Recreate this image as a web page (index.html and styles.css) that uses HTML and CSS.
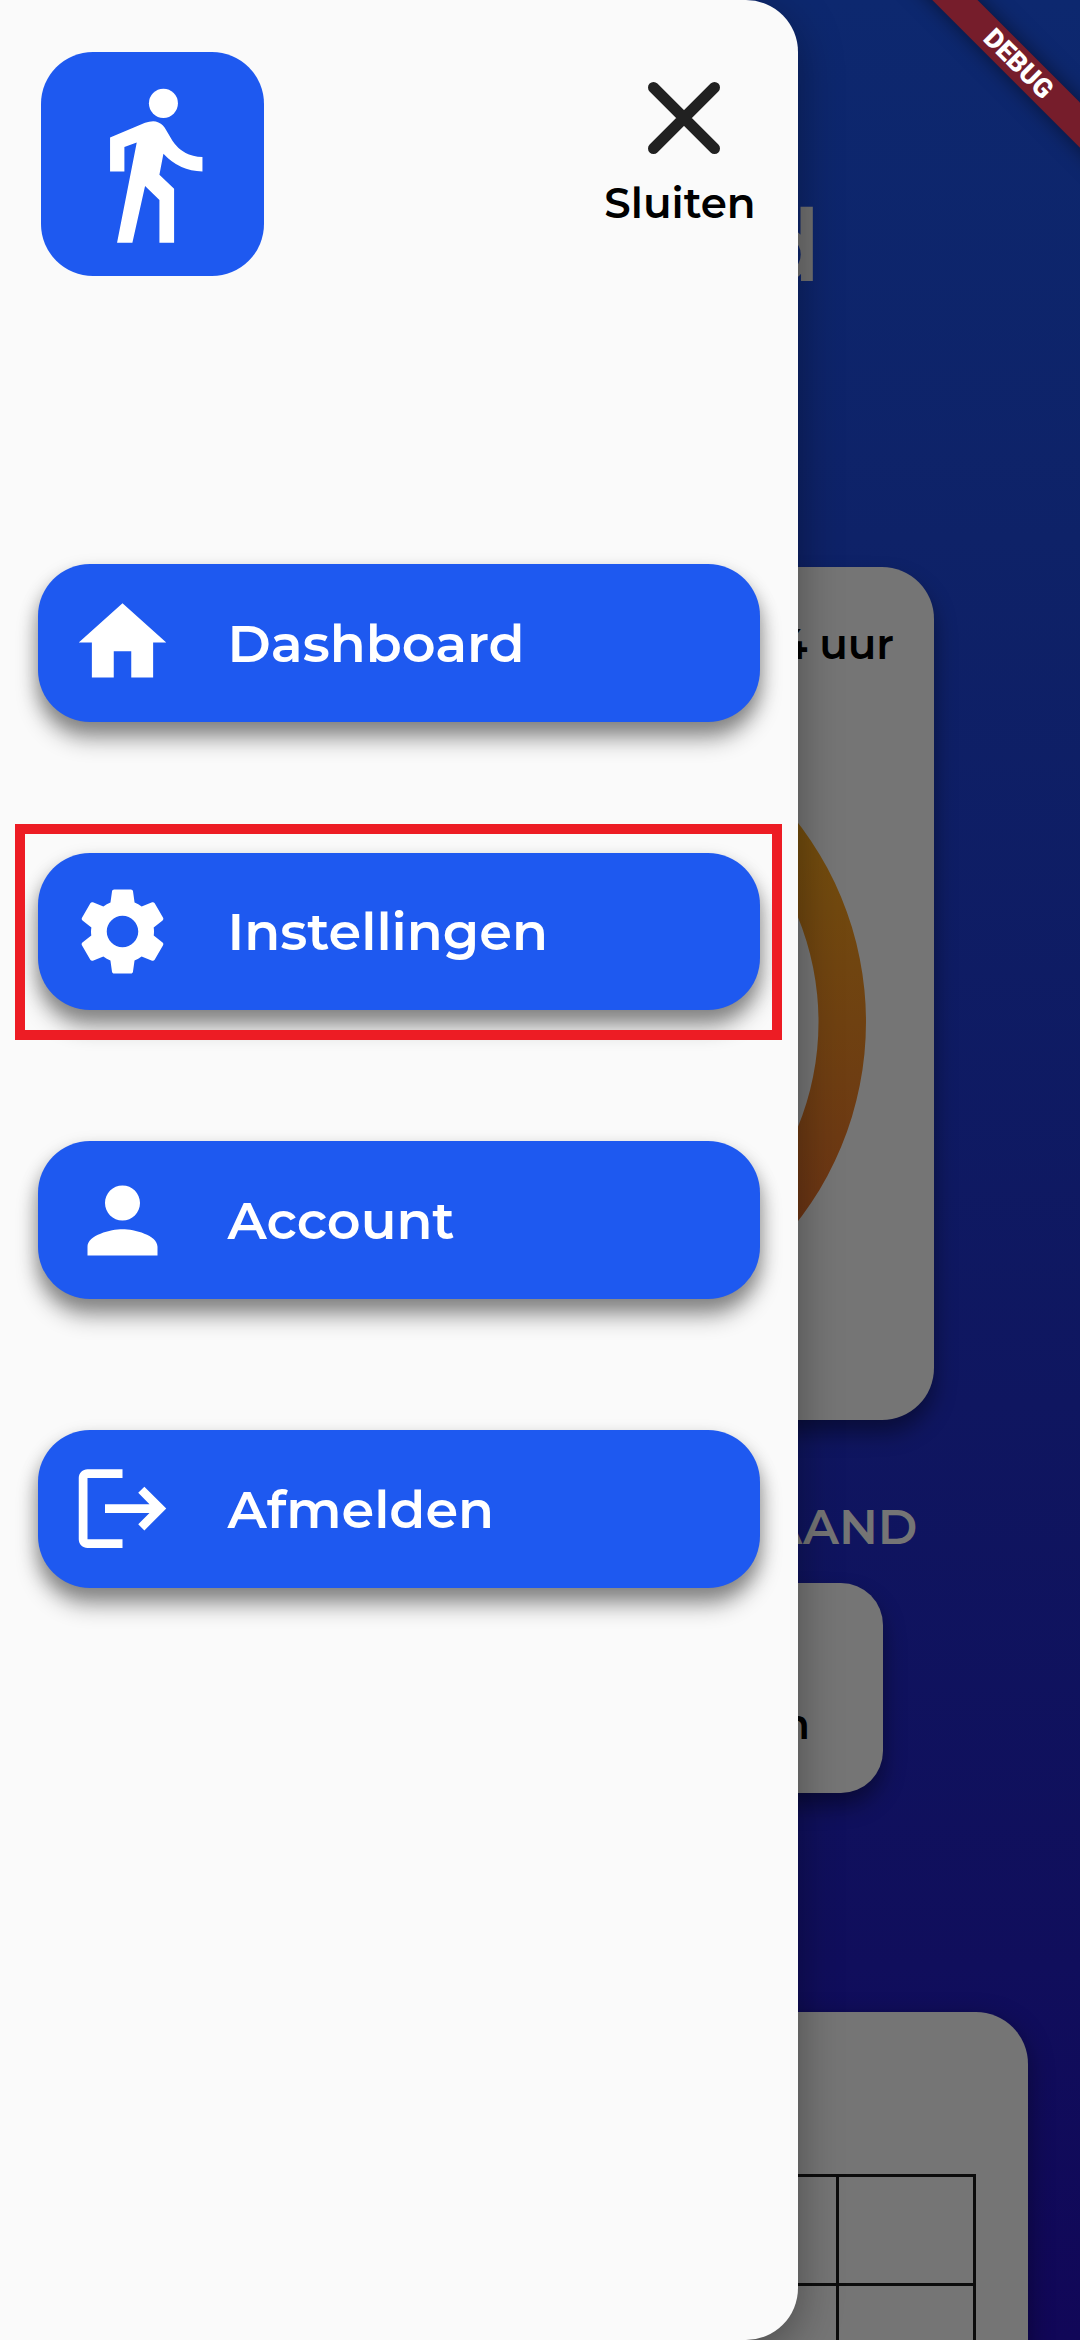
FILE: index.html
```html
<!DOCTYPE html>
<html lang="nl">
<head>
<meta charset="utf-8">
<title>Dashboard</title>
<link rel="stylesheet" href="styles.css">
</head>
<body>
<div class="screen">
  <main class="page">
    <h1 class="page-title">Dashboard</h1>
    <section class="card day-card">
      <p class="card-label">24 uur</p>
      <svg class="ring" viewBox="0 0 652 652">
        <defs>
          <linearGradient id="ringFill" x1="0" y1="0" x2="0" y2="1">
            <stop offset="0.15" stop-color="#734f0d"/>
            <stop offset="0.85" stop-color="#6b3315"/>
          </linearGradient>
        </defs>
        <path fill="url(#ringFill)" fill-rule="evenodd" d="M326 0a326 326 0 1 1 0 652a326 326 0 1 1 0-652zM326 47.500a278.500 278.500 0 1 0 0 557a278.500 278.500 0 1 0 0-557z"/>
      </svg>
    </section>
    <h2 class="section-title">MAAND</h2>
    <section class="card month-card"><p class="month-label">stappen</p></section>
    <section class="card table-card">
      <div class="table">
        <i></i><i></i><i></i><i></i><i></i><i></i>
        <i></i><i></i><i></i><i></i><i></i><i></i>
      </div>
    </section>
  </main>

  <aside class="drawer">
    <header class="drawer-head">
      <svg class="logo" viewBox="122 156 670 670">
        <circle cx="489" cy="310" r="43.500"/>
        <path d="M329 412L434 368Q451 362 466 364Q483 368 493 383L516 422Q547 469 606 471V514Q537 513 489 461L477 524L521 566V728H477V600L434 558L396 728H350L409 427L372 441V514H329Z"/>
      </svg>
      <button class="close">
        <svg viewBox="0 0 72 72"><path d="M5.500 5.500l61 61M66.500 5.500l-61 61"/></svg>
        <span>Sluiten</span>
      </button>
    </header>
    <nav class="menu">
      <a class="item">
        <svg viewBox="0 0 24 24"><path d="M10 20v-6h4v6h5v-8h3L12 3 2 12h3v8z"/></svg>
        <span>Dashboard</span>
      </a>
      <a class="item selected">
        <svg viewBox="0 0 24 24"><path d="M19.140 12.940c.04-.3.06-.61.06-.94 0-.32-.02-.64-.07-.94l2.030-1.580c.18-.14.23-.41.12-.61l-1.920-3.320c-.12-.22-.37-.29-.59-.22l-2.390.96c-.5-.38-1.030-.7-1.620-.94l-.36-2.540c-.04-.24-.24-.41-.48-.41h-3.840c-.24 0-.43.17-.47.41l-.36 2.540c-.59.24-1.130.57-1.620.94l-2.390-.96c-.22-.08-.47 0-.59.22L2.740 8.870c-.12.21-.08.47.12.61l2.030 1.580c-.05.3-.09.63-.09.94s.02.64.07.94l-2.030 1.580c-.18.14-.23.41-.12.61l1.920 3.320c.12.22.37.29.59.22l2.390-.96c.5.38 1.030.7 1.620.94l.36 2.540c.05.24.24.41.48.41h3.840c.24 0 .44-.17.47-.41l.36-2.540c.59-.24 1.130-.56 1.620-.94l2.390.96c.22.08.47 0 .59-.22l1.920-3.320c.12-.22.07-.47-.12-.61l-2.010-1.580zM12 15.600c-1.980 0-3.600-1.620-3.600-3.600s1.620-3.600 3.600-3.600 3.600 1.620 3.600 3.600-1.620 3.600-3.600 3.600z"/></svg>
        <span>Instellingen</span>
      </a>
      <a class="item">
        <svg viewBox="0 0 24 24"><path d="M12 12c2.210 0 4-1.790 4-4s-1.790-4-4-4-4 1.790-4 4 1.790 4 4 4zm0 2c-2.670 0-8 1.340-8 4v2h16v-2c0-2.660-5.330-4-8-4z"/></svg>
        <span>Account</span>
      </a>
      <a class="item">
        <svg viewBox="0 0 24 24"><path d="M17 7l-1.410 1.410L18.170 11H8v2h10.170l-2.580 2.580L17 17l5-5zM4 5h8V3H4c-1.100 0-2 .9-2 2v14c0 1.100.9 2 2 2h8v-2H4V5z"/></svg>
        <span>Afmelden</span>
      </a>
    </nav>
  </aside>
  <div class="debug">DEBUG</div>
</div>
</body>
</html>
```

FILE: styles.css
```css
* { box-sizing: border-box; margin: 0; padding: 0; }

body {
  width: 1080px;
  height: 2340px;
  overflow: hidden;
  font-family: Montserrat, Inter, sans-serif;
}

.screen {
  position: relative;
  width: 1080px;
  height: 2340px;
  overflow: hidden;
  background: linear-gradient(#0d286f 0, #0e2268 23%, #0f1660 60%, #100e5c 84%, #110758 100%);
}

/* Dimmed page behind the drawer */
.page {
  display: flex;
  flex-direction: column;
  align-items: center;
}

.page-title {
  width: 562px;
  height: 120px;
  margin-top: 186px;
  line-height: 120px;
  font-size: 99px;
  font-weight: 600;
  text-align: right;
  white-space: nowrap;
  color: #717171;
}

.card {
  background: #757575;
  border-radius: 52px;
  box-shadow: 0 13px 22px rgba(0, 0, 0, .4);
}

.day-card {
  width: 788px;
  height: 853px;
  margin-top: 261px;
  padding: 50px 40px 0;
  display: flex;
  flex-direction: column;
}

.card-label {
  height: 54px;
  line-height: 54px;
  font-size: 42px;
  font-weight: 600;
  text-align: right;
  color: #000;
}

.ring {
  width: 652px;
  height: 652px;
  margin: 25px auto 0;
}

.section-title {
  width: 755px;
  height: 60px;
  margin-top: 77px;
  line-height: 60px;
  font-size: 48px;
  font-weight: 600;
  text-align: right;
  color: #757575;
}

.month-card {
  width: 686px;
  height: 210px;
  margin-top: 26px;
  border-radius: 42px;
  padding: 114px 73px 0 0;
}

.month-label {
  line-height: 54px;
  font-size: 42px;
  font-weight: 600;
  text-align: right;
  color: #000;
}

.table-card {
  width: 976px;
  height: 480px;
  margin-top: 219px;
  padding: 162px 52px 0;
  display: flex;
  justify-content: flex-end;
  box-shadow: 0 8px 26px rgba(0, 0, 0, .4);
}

.table {
  display: grid;
  grid-template-columns: repeat(6, 137px);
  grid-auto-rows: 109px;
  align-content: start;
  height: 330px;
  border-top: 3px solid #0c0c0c;
}

.table i {
  border: solid #0c0c0c;
  border-width: 0 3px 3px 0;
}

/* Navigation drawer */
.drawer {
  position: absolute;
  inset: 0 auto 0 0;
  width: 798px;
  padding: 52px 38px 0;
  background: #fafafa;
  border-radius: 0 52px 52px 0;
  box-shadow: 0 12px 44px rgba(0, 0, 0, .35);
}

.drawer-head {
  display: flex;
  justify-content: space-between;
  align-items: flex-start;
  height: 512px;
  padding: 0 0 0 2.700px;
}

.logo {
  width: 223.500px;
  height: 223.500px;
  border-radius: 52px;
  background: #1e59f0;
  fill: #fff;
}

.close {
  display: flex;
  flex-direction: column;
  align-items: center;
  width: 160px;
  margin-top: 30px;
  border: 0;
  background: none;
  font: 600 42px/54px Montserrat, Inter, sans-serif;
  color: #000;
}

.close svg {
  width: 72px;
  height: 72px;
  margin-left: 8px;
  stroke: #212121;
  stroke-width: 11;
  stroke-linecap: round;
}

.close span { margin-top: 22px; white-space: nowrap; }

.menu {
  display: grid;
  gap: 131.200px;
}

.item {
  position: relative;
  display: flex;
  align-items: center;
  gap: 53px;
  height: 157.500px;
  padding-left: 31.500px;
  border-radius: 52px;
  background: #1e59f0;
  box-shadow: 0 18px 22px rgba(0, 0, 0, .32), 0 8px 18px rgba(0, 0, 0, .26);
  font-size: 52.500px;
  font-weight: 600;
  color: #fff;
}

.item svg { width: 105px; height: 105px; fill: #fff; }

/* Frame that marks the highlighted entry */
.selected::after {
  content: "";
  position: absolute;
  inset: -29px -22px -30px -23px;
  border: 10px solid #ed1c24;
}

.debug {
  position: absolute;
  top: 46px;
  left: 867px;
  width: 300px;
  height: 31.500px;
  padding-left: 5px;
  transform: rotate(45deg);
  background: #761d2b;
  box-shadow: 0 0 20px rgba(0, 0, 0, .5);
  font: 900 26.800px/32px Roboto, sans-serif;
  text-align: center;
  color: #fff;
}
```
